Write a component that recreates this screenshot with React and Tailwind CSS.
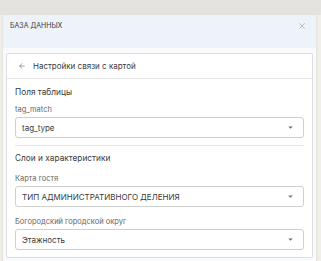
import { ArrowLeft, X } from 'lucide-react';

function Caret() {
  return (
    <svg width="5" height="3" viewBox="0 0 6 4" className="shrink-0">
      <path d="M0 0.5 L6 0.5 L3 3.5 Z" fill="#6b6b6b" />
    </svg>
  );
}

function SelectBox({ value }) {
  return (
    <div className="h-[21px] border border-[#cfcfcf] rounded-[3px] bg-white flex items-center justify-between pl-[6px] pr-[10px]">
      <span className="text-[8px] text-[#3a3a3a]">{value}</span>
      <Caret />
    </div>
  );
}

function Field({ label, value, className = '' }) {
  return (
    <div className={className}>
      <div className="text-[7.5px] leading-[10px] text-[#666]">{label}</div>
      <div className="mt-[2px]">
        <SelectBox value={value} />
      </div>
    </div>
  );
}

export default function App() {
  return (
    <div
      className="w-[321px] h-[261px] overflow-hidden bg-[#f1efe9] flex flex-col"
      style={{ fontFamily: 'Inter, "Noto Sans", sans-serif' }}
    >
      <div className="h-[15px] shrink-0 bg-[#e4e3e0]" />
      <div className="ml-[3px] w-[313px] flex-1 flex flex-col bg-[#f9fafc] shadow-sm">
        <div className="h-[33px] bg-[#eef3fa] flex items-start justify-between pl-[7px] pr-[9px] pt-[6px]">
          <span className="text-[7px] leading-[10px] text-[#3a3a3a] uppercase">База данных</span>
          <X size={10} strokeWidth={1.2} className="text-[#8a8a8a]" />
        </div>
        <div className="px-[3px] pt-[5px]">
          <div className="border border-[#dedede] bg-white rounded-[2px] pb-[7px]">
            <div className="h-[25px] border-b border-[#e3e3e3] flex items-center pl-[11px] gap-[7px]">
              <ArrowLeft size={8} strokeWidth={1.6} className="text-[#555]" />
              <span className="text-[8px] text-[#3a3a3a]">Настройки связи с картой</span>
            </div>
            <div className="px-[8px]">
              <div className="pt-[7px] text-[8.3px] leading-[12px] text-[#3a3a3a]">Поля таблицы</div>
              <Field label="tag_match" value="tag_type" className="mt-[7px]" />
              <div className="mt-[7px] border-t border-[#e3e3e3]" />
              <div className="pt-[6px] text-[8.3px] leading-[12px] text-[#3a3a3a]">Слои и характеристики</div>
              <Field label="Карта гостя" value="ТИП АДМИНИСТРАТИВНОГО ДЕЛЕНИЯ" className="mt-[10px]" />
              <Field label="Богородский городской округ" value="Этажность" className="mt-[10px]" />
            </div>
          </div>
        </div>
      </div>
    </div>
  );
}
